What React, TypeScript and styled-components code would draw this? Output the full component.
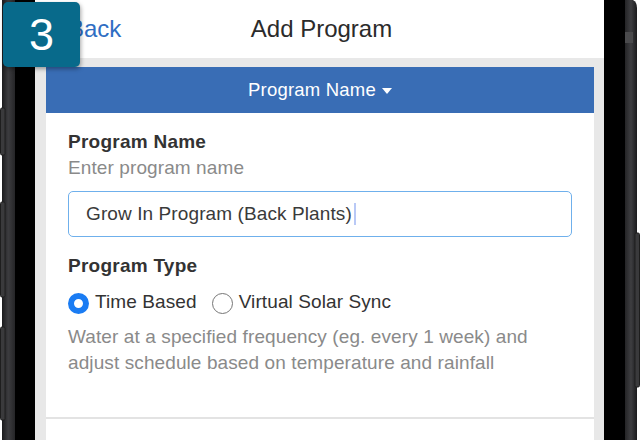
import styled, { createGlobalStyle } from "styled-components";

const GlobalStyle = createGlobalStyle`
  html, body {
    margin: 0;
    padding: 0;
    background: #ffffff;
    overflow: hidden;
  }
  body {
    font-family: "Liberation Sans", Arial, Helvetica, sans-serif;
  }
`;

const Phone = styled.div`
  position: relative;
  display: flex;
  width: 640px;
  height: 440px;
`;

const Bezel = styled.svg`
  display: block;
  flex: none;
`;

const Screen = styled.div`
  flex: 1;
  display: flex;
  flex-direction: column;
  background: #e8e8e8;
`;

const Header = styled.div`
  height: 58px;
  flex: none;
  display: grid;
  grid-template-columns: 1fr auto 1fr;
  align-items: center;
  padding: 0 33px;
  background: #ffffff;
`;

const BackLink = styled.span`
  font-size: 24px;
  color: #2f6ec3;
`;

const Title = styled.span`
  font-size: 24px;
  color: #2b2b2b;
  transform: translateX(2px);
`;

const Card = styled.div`
  flex: 1;
  display: flex;
  flex-direction: column;
  margin: 9px 10px 0 11px;
  background: #ffffff;
`;

const SectionBar = styled.div`
  height: 46px;
  flex: none;
  display: flex;
  align-items: center;
  justify-content: center;
  background: #396db5;
  color: #ffffff;
  font-size: 18.5px;
  letter-spacing: 0.2px;
`;

const DropCaret = styled.span`
  width: 0;
  height: 0;
  margin-left: 6px;
  margin-top: 2px;
  border-left: 5.5px solid transparent;
  border-right: 5.5px solid transparent;
  border-top: 6px solid #ffffff;
`;

const Form = styled.div`
  display: flex;
  flex-direction: column;
  padding: 17px 22px 41px;
  border-bottom: 2px solid #e3e3e3;
  letter-spacing: 0.1px;
`;

const Label = styled.div<{ $gap?: number }>`
  margin-top: ${(p) => p.$gap ?? 0}px;
  font-size: 19px;
  line-height: 23px;
  font-weight: 700;
  letter-spacing: 0.25px;
  color: #333333;
`;

const Hint = styled.div`
  margin-top: 3px;
  font-size: 19px;
  line-height: 23px;
  color: #8a8a8a;
`;

const InputBox = styled.div`
  box-sizing: border-box;
  height: 46px;
  margin-top: 12px;
  display: flex;
  align-items: center;
  padding: 0 17px;
  border: 1.5px solid #6fb0ec;
  border-radius: 5px;
  font-size: 19px;
  color: #3a3a3a;
`;

const TextCaret = styled.span`
  width: 2px;
  height: 22px;
  margin-left: 2px;
  background: #b9c9f6;
`;

const RadioRow = styled.div`
  display: flex;
  margin-top: 13px;
`;

const RadioOption = styled.label`
  display: flex;
  align-items: flex-start;
  & + & {
    margin-left: 15px;
  }
`;

const RadioDot = styled.span<{ $checked?: boolean }>`
  box-sizing: border-box;
  width: 21px;
  height: 21px;
  margin-top: 3px;
  margin-right: 6px;
  border-radius: 50%;
  background: #ffffff;
  border: ${(p) => (p.$checked ? "6.5px solid #1a7cf3" : "1.5px solid #767676")};
`;

const RadioText = styled.span`
  font-size: 19px;
  line-height: 23px;
  color: #333333;
`;

const Description = styled.p`
  margin: 10px 0 0;
  font-size: 19px;
  line-height: 26px;
  color: #8a8a8a;
`;

const StepBadge = styled.div`
  position: absolute;
  left: 3px;
  top: 2px;
  width: 77px;
  height: 65px;
  display: flex;
  align-items: center;
  justify-content: center;
  border-radius: 5px;
  background: #086a8b;
  box-shadow: 1px 2px 4px rgba(0, 0, 0, 0.35);
  color: #ffffff;
  font-size: 45px;
`;

const LeftBezel = () => (
  <Bezel width="35" height="440" viewBox="0 0 35 440">
    <defs>
      <linearGradient id="frameL" x1="0" x2="1" y1="0" y2="0">
        <stop offset="0" stopColor="#1b1b1d" />
        <stop offset="0.45" stopColor="#3c3c3f" />
        <stop offset="1" stopColor="#222224" />
      </linearGradient>
    </defs>
    <rect x="2" y="0" width="14" height="440" fill="url(#frameL)" />
    <rect x="15" y="0" width="20" height="440" fill="#000" />
    <rect x="0.5" y="108" width="4.5" height="47" rx="1.5" fill="#3a3a3c" stroke="#1e1e1e" />
    <rect x="0.5" y="202" width="4.5" height="95" rx="1.5" fill="#3a3a3c" stroke="#1e1e1e" />
    <rect x="0.5" y="327" width="4.5" height="93" rx="1.5" fill="#3a3a3c" stroke="#1e1e1e" />
  </Bezel>
);

const RightBezel = () => (
  <Bezel width="36" height="440" viewBox="0 0 36 440">
    <defs>
      <linearGradient id="frameR" x1="0" x2="1" y1="0" y2="0">
        <stop offset="0" stopColor="#242426" />
        <stop offset="0.5" stopColor="#3e3e41" />
        <stop offset="1" stopColor="#1b1b1d" />
      </linearGradient>
    </defs>
    <rect x="0" y="0" width="21" height="440" fill="#000" />
    <path d="M21 0 H29 Q33 2 33 8 V440 H21 Z" fill="url(#frameR)" />
    <rect x="21" y="32" width="8" height="11" fill="#4a4a4c" />
    <rect x="31" y="233" width="4.5" height="154" rx="1.5" fill="#3a3a3c" stroke="#1e1e1e" />
  </Bezel>
);

export default function App() {
  return (
    <>
      <GlobalStyle />
      <Phone>
        <LeftBezel />
        <Screen>
          <Header>
            <BackLink>Back</BackLink>
            <Title>Add Program</Title>
            <span />
          </Header>
          <Card>
            <SectionBar>
              Program Name
              <DropCaret />
            </SectionBar>
            <Form>
              <Label>Program Name</Label>
              <Hint>Enter program name</Hint>
              <InputBox>
                Grow In Program (Back Plants)
                <TextCaret />
              </InputBox>
              <Label $gap={17}>Program Type</Label>
              <RadioRow>
                <RadioOption>
                  <RadioDot $checked />
                  <RadioText>Time Based</RadioText>
                </RadioOption>
                <RadioOption>
                  <RadioDot />
                  <RadioText>Virtual Solar Sync</RadioText>
                </RadioOption>
              </RadioRow>
              <Description>
                Water at a specified frequency (eg. every 1 week) and adjust schedule based on
                temperature and rainfall
              </Description>
            </Form>
          </Card>
        </Screen>
        <RightBezel />
        <StepBadge>3</StepBadge>
      </Phone>
    </>
  );
}
